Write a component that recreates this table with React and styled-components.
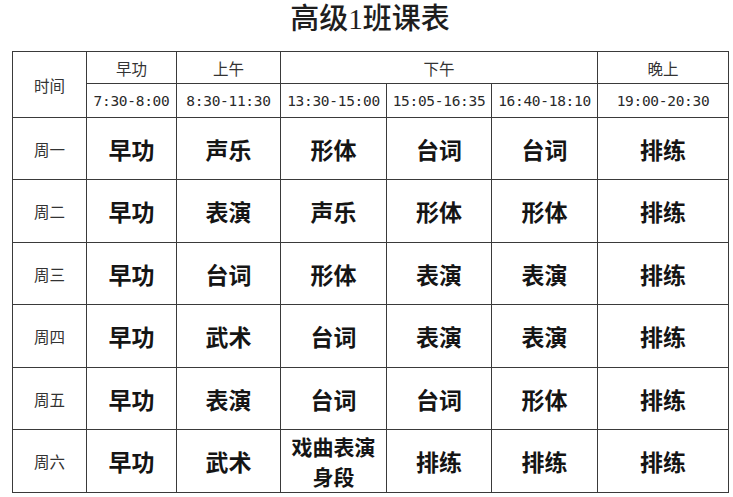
import React from 'react';
import styled, { createGlobalStyle } from 'styled-components';

const GlobalStyle = createGlobalStyle`
  html, body {
    margin: 0;
    padding: 0;
    background: #ffffff;
  }
`;

const LINE = '#3a3a3a';

const Page = styled.div`
  width: 733px;
  height: 497px;
  box-sizing: border-box;
  padding: 0 0 0 12px;
  background: #fff;
  font-family: "Noto Sans CJK SC", sans-serif;
`;

const Title = styled.h1`
  margin: 0;
  height: 51px;
  width: 716px;
  text-align: center;
  font-family: "Liberation Serif", "Noto Sans CJK SC", serif;
  font-size: 29px;
  font-weight: 500;
  line-height: 38px;
  color: #1e1e1e;
`;

const Table = styled.table`
  border-collapse: collapse;
  table-layout: fixed;
  width: 716px;
`;

const Cell = styled.td`
  border: 1px solid ${LINE};
  padding: 0;
  text-align: center;
  vertical-align: middle;
  color: #333;
  font-size: 15.5px;
  font-weight: 400;
  line-height: 20px;
`;

const TimeCell = styled(Cell)`
  font-family: "DejaVu Sans Mono", "Liberation Mono", monospace;
  font-size: 14.5px;
  letter-spacing: -0.3px;
  color: #2a2a2a;
`;

const DayCell = styled(Cell)`
  font-size: 15.5px;
  color: #333;
`;

const ClassCell = styled(Cell)`
  font-size: 23px;
  font-weight: 700;
  color: #151515;
  line-height: 28px;
`;

const Line = styled.span`
  display: block;
  font-size: 21px;
  line-height: 30px;
`;

const HeaderRow = styled.tr`
  height: ${p => p.$h}px;
`;

const BodyRow = styled.tr`
  height: ${p => p.$h}px;
`;

const colWidths = [74, 90, 104, 106, 105, 106, 131];

const schedule = [
  ['周一', '早功', '声乐', '形体', '台词', '台词', '排练'],
  ['周二', '早功', '表演', '声乐', '形体', '形体', '排练'],
  ['周三', '早功', '台词', '形体', '表演', '表演', '排练'],
  ['周四', '早功', '武术', '台词', '表演', '表演', '排练'],
  ['周五', '早功', '表演', '台词', '台词', '形体', '排练'],
  ['周六', '早功', '武术', '戏曲表演\n身段', '排练', '排练', '排练'],
];

const rowHeights = [62, 63, 62, 63, 62, 63];

const times = ['7:30-8:00', '8:30-11:30', '13:30-15:00', '15:05-16:35', '16:40-18:10', '19:00-20:30'];

const App = () => (
  <Page>
    <GlobalStyle />
    <Title>高级1班课表</Title>
    <Table>
      <colgroup>
        {colWidths.map((w, i) => <col key={i} style={{ width: w }} />)}
      </colgroup>
      <tbody>
        <HeaderRow $h={32}>
          <Cell rowSpan={2}>时间</Cell>
          <Cell>早功</Cell>
          <Cell>上午</Cell>
          <Cell colSpan={3}>下午</Cell>
          <Cell>晚上</Cell>
        </HeaderRow>
        <HeaderRow $h={34}>
          {times.map(t => <TimeCell key={t}>{t}</TimeCell>)}
        </HeaderRow>
        {schedule.map(([day, ...items], r) => (
          <BodyRow key={day} $h={rowHeights[r]}>
            <DayCell>{day}</DayCell>
            {items.map((item, i) => {
              const lines = item.split('\n');
              return (
                <ClassCell key={i}>
                  {lines.length > 1
                    ? lines.map(l => <Line key={l}>{l}</Line>)
                    : item}
                </ClassCell>
              );
            })}
          </BodyRow>
        ))}
      </tbody>
    </Table>
  </Page>
);

export default App;
